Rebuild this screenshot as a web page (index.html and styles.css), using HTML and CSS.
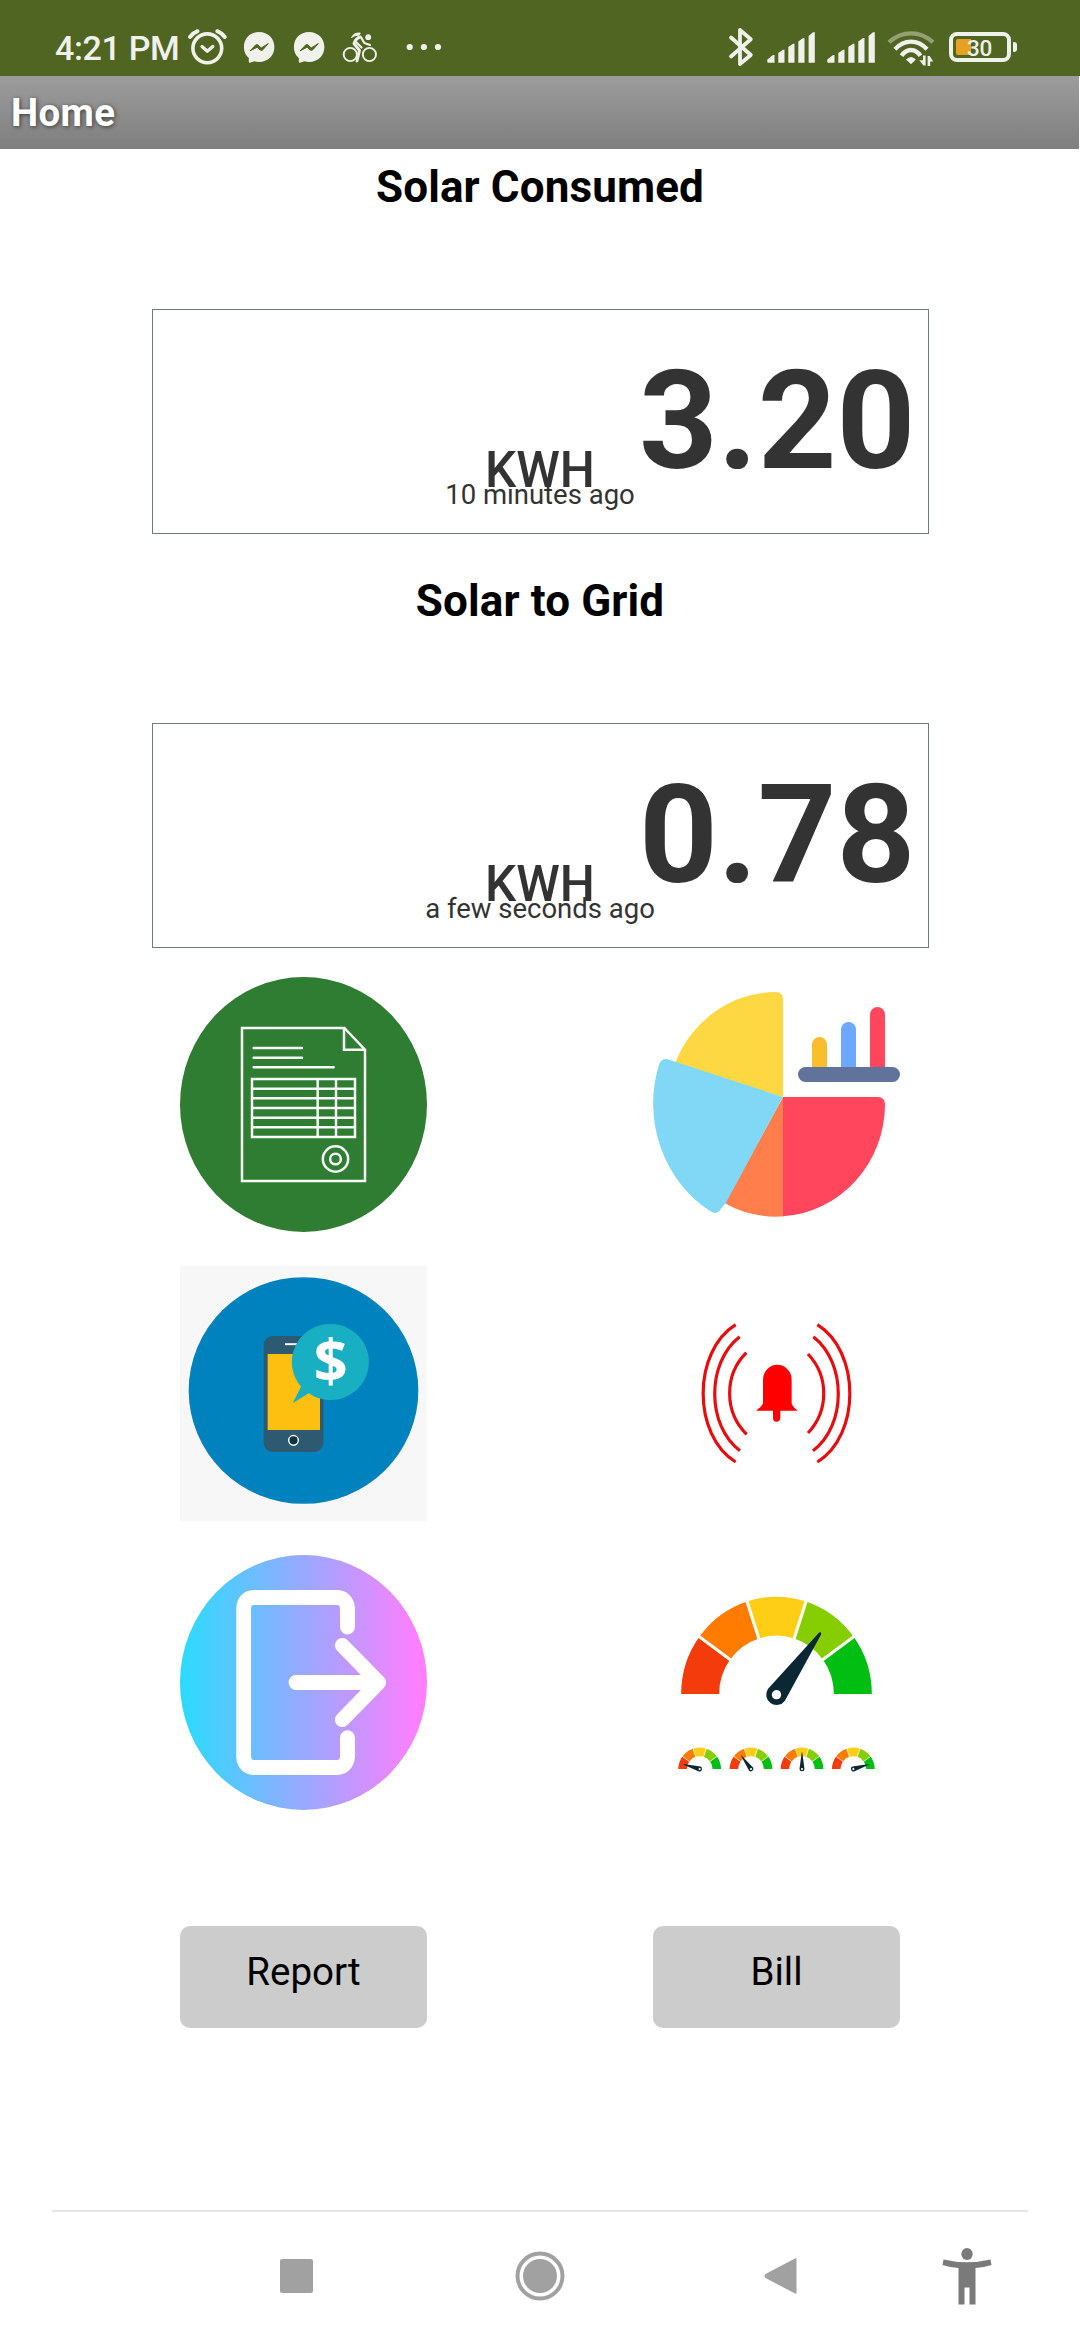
FILE: index.html
```html
<!DOCTYPE html>
<html lang="en">
<head>
<meta charset="utf-8">
<title>Home</title>
<link rel="stylesheet" href="styles.css">
</head>
<body>
<div class="screen">
  <div class="status-bar">
    <span class="clock">4:21 PM</span>
    <svg class="ico alarm" viewBox="186 26 42 42" width="42" height="42" fill="none" stroke="#f0f1ea" stroke-linecap="round">
      <circle cx="207.3" cy="48.3" r="14.4" stroke-width="3.6"/>
      <path d="M190 37Q193 33 197.500 31.200M224.800 37Q221.800 33 217.300 31.200" stroke-width="4"/>
      <path d="M202 46.500L207.300 51.200L212.800 46.500" stroke-width="3.300" stroke-linejoin="round"/>
    </svg>
    <svg class="ico chat" viewBox="243 31 32 33" width="32" height="33">
      <path d="M259 32C250 32 243.900 38.500 243.900 47C243.900 51.500 245.500 55.500 248.800 58V61.500Q248.900 63.400 250.600 62.600L254.500 61.300Q256.500 62 259 62C268 62 274.400 55.500 274.400 47C274.400 38.500 268 32 259 32Z" fill="#f0f1ea"/>
      <path d="M250.200 50.800L255.600 45Q256.800 44 258 45L261.200 48L268.300 43.600L262.800 49.800Q261.600 51 260.400 50L257.200 47.200Z" fill="#516523" stroke="#516523" stroke-width="1" stroke-linejoin="round"/>
    </svg>
    <svg class="ico chat-2" viewBox="243 31 32 33" width="32" height="33">
      <path d="M259 32C250 32 243.900 38.500 243.900 47C243.900 51.500 245.500 55.500 248.800 58V61.500Q248.900 63.400 250.600 62.600L254.500 61.300Q256.500 62 259 62C268 62 274.400 55.500 274.400 47C274.400 38.500 268 32 259 32Z" fill="#f0f1ea"/>
      <path d="M250.200 50.800L255.600 45Q256.800 44 258 45L261.200 48L268.300 43.600L262.800 49.800Q261.600 51 260.400 50L257.200 47.200Z" fill="#516523" stroke="#516523" stroke-width="1" stroke-linejoin="round"/>
    </svg>
    <svg class="ico bike" viewBox="341 31 36 33" width="36" height="33" fill="none" stroke="#f0f1ea" stroke-linecap="round" stroke-linejoin="round">
      <circle cx="349.300" cy="54.500" r="6.600" stroke-width="1.900"/>
      <circle cx="368.400" cy="54.500" r="6.600" stroke-width="1.900"/>
      <circle cx="367.200" cy="37.200" r="2.900" fill="#f0f1ea" stroke="none"/>
      <path d="M350.800 37.200Q352.500 32.600 359.300 33L358 35.200Q354 35 350.800 37.200Z" fill="#f0f1ea" stroke-width="1"/>
      <path d="M359.300 37Q354.500 38.500 353 43.500L358.500 50.500L356 61" stroke-width="2.900"/>
      <path d="M355 42L360.500 47.500M360.500 38L363.300 43L369 45" stroke-width="2.200"/>
    </svg>
    <svg class="ico dots" viewBox="405 43 36 8" width="36" height="8" fill="#f0f1ea">
      <circle cx="408.700" cy="47" r="3.100"/><circle cx="422.900" cy="47" r="3.100"/><circle cx="437" cy="47" r="3.100"/>
    </svg>
    <span class="spacer"></span>
    <svg class="ico bluetooth" viewBox="728 27 26 40" width="26" height="40" fill="none" stroke="#f0f1ea" stroke-width="3.800" stroke-linecap="round" stroke-linejoin="round">
      <path d="M731 37.500L750.800 55L740 64V30L750.800 39.300L731 56.500"/>
    </svg>
    <svg class="ico signal" viewBox="767 31 49 33" width="49" height="33" fill="#f0f1ea">
      <path d="M767.300 59.500L773 55H774.500V62.800H768.300Q767.300 62.800 767.300 61.800ZM778.300 53L783 49.700H784.500V62.800H778.300ZM788.300 47L793 43.700H794.500V62.800H788.300ZM798.300 41.500L803 38H804.500V62.800H798.300ZM808.600 36L813 32.300H814.800V62.800H808.600Z"/>
    </svg>
    <svg class="ico signal-2" viewBox="767 31 49 33" width="49" height="33" fill="#f0f1ea">
      <path d="M767.300 59.500L773 55H774.500V62.800H768.300Q767.300 62.800 767.300 61.800ZM778.300 53L783 49.700H784.500V62.800H778.300ZM788.300 47L793 43.700H794.500V62.800H788.300ZM798.300 41.500L803 38H804.500V62.800H798.300ZM808.600 36L813 32.300H814.800V62.800H808.600Z"/>
    </svg>
    <svg class="ico wifi" viewBox="887 30 48 37" width="48" height="37" fill="none" stroke="#f0f1ea" stroke-width="4.300">
      <path d="M889 42.300Q898.500 33.300 911 33.300T933 42.300" stroke="#949f74"/>
      <path d="M895 49.200Q902 41.600 911 41.600T927 49.200"/>
      <path d="M901.500 55.800Q905.500 50 911 50T920.500 55.800"/>
      <path d="M906 59.500Q911 54.500 915.800 59.500L911 64.300Z" fill="#f0f1ea" stroke="none"/>
      <path d="M923 55.500H925.600V65.500H923.500L919.300 60.200H923ZM927.600 66V56H929.700L933.200 61.500H930.200V66Z" fill="#f0f1ea" stroke="none"/>
    </svg>
    <div class="battery"><span class="battery-fill"></span><span class="battery-text">30</span></div>
    <span class="battery-nub"></span>
  </div>

  <header class="title-bar">Home</header>

  <main class="content">
    <section class="meter">
      <h2>Solar Consumed</h2>
      <div class="reading">
        <span class="unit">KWH</span>
        <span class="value">3.20</span>
        <span class="when">10 minutes ago</span>
      </div>
    </section>
    <section class="meter">
      <h2>Solar to Grid</h2>
      <div class="reading">
        <span class="unit">KWH</span>
        <span class="value">0.78</span>
        <span class="when">a few seconds ago</span>
      </div>
    </section>

    <div class="tiles">
      <svg class="tile" viewBox="60 51 741 765">
        <ellipse cx="430.500" cy="433.500" rx="370.500" ry="382.500" fill="#2f7d32"/>
        <g fill="none" stroke="#f8fbf8" stroke-width="7.500">
          <path d="M246 204H553L615 269V663H246ZM552 206V269H613"/>
          <path d="M281 264H426M281 293H426M281 322H521" stroke-linecap="round"/>
          <path d="M276 357H585V531H276ZM276 386H585M276 415H585M276 444H585M276 473H585M276 502H585M473 357V531M528 357V531"/>
          <circle cx="526.500" cy="597" r="38"/><circle cx="526.500" cy="597" r="16"/>
        </g>
      </svg>
      <svg class="tile" viewBox="69 51 741 765">
        <path d="M459 411L285 730Q352 769 437 770L462 769V411Z" fill="#ff7e4b"/>
        <path d="M459 411V116Q458 97 437 96A328 337 0 0 0 137 305L140 315Z" fill="#fed843"/>
        <path d="M459 411H743Q765 412 765 433A328 337 0 0 1 459 769Z" fill="#ff465c"/>
        <path d="M459 411L113 298Q94 294 87 314A362 380 0 0 0 241 754Q263 767 274 745L286 731Z" fill="#80d8f6"/>
        <path d="M546 325V254A22.500 23 0 0 1 591 254V325Z" fill="#fabe2c"/>
        <path d="M633 325V209A22.500 23 0 0 1 678 209V325Z" fill="#6ca8ff"/>
        <path d="M720 325V164A22.500 23 0 0 1 765 164V325Z" fill="#ff465c"/>
        <rect x="504" y="321" width="306" height="45" rx="22.500" fill="#62739b"/>
      </svg>
      <svg class="tile" viewBox="60 48 741 765">
        <rect x="60" y="48" width="741" height="765" fill="#f7f7f7"/>
        <ellipse cx="430.500" cy="421.500" rx="344.500" ry="340" fill="#0082be"/>
        <rect x="311" y="258" width="179" height="348" rx="27" fill="#2d5971"/>
        <path d="M375 282.500H425" stroke="#f5f8fa" stroke-width="6"/>
        <rect x="323" y="312" width="157" height="228" fill="#fdc010"/>
        <circle cx="400.500" cy="571" r="14.500" fill="#0d3348" stroke="#f5fafa" stroke-width="4.500"/>
        <path d="M512 222A115.500 114 0 1 1 446 430L398 460L423 410A115.500 114 0 0 1 512 222Z" fill="#17afc1"/>
        <text class="dollar" x="512" y="396" text-anchor="middle">$</text>
      </svg>
      <svg class="tile" viewBox="69 48 741 765">
        <path d="M399 390A42.500 45 0 0 1 485 390V460Q488 472 503 482H451V503Q450 515 439.500 515T429 503V482H378Q394 472 399 460Z" fill="#f00"/>
        <g fill="none" stroke="#e90c0e" stroke-width="9.500">
          <path d="M317 224C187 305 187 556 317 636M329 260C229 338 229 526 330 602M349 308C282 375 282 486 350 553"/>
          <path d="M562 224C692 305 692 556 562 636M550 260C650 338 650 526 549 602M534 312C597 379 597 482 534 549"/>
        </g>
      </svg>
      <svg class="tile" viewBox="60 45 741 765">
        <defs>
          <linearGradient id="sky" x1="0" x2="1" y1="0" y2="0">
            <stop offset="0" stop-color="#2cdbff"/><stop offset=".07" stop-color="#38d5ff"/><stop offset=".5" stop-color="#98a9ff"/><stop offset=".95" stop-color="#fb80ff"/><stop offset="1" stop-color="#ff7efd"/>
          </linearGradient>
        </defs>
        <ellipse cx="430.500" cy="427.500" rx="370.500" ry="382.500" fill="url(#sky)"/>
        <g fill="none" stroke="#fff" stroke-width="44.500" stroke-linecap="round" stroke-linejoin="round">
          <path d="M562.500 261V205Q560 174 532 172.500H281Q253 174 251 205V650Q253 680 281 682.500H532Q560 680 562.500 650V593"/>
          <path d="M408 427.500H655M547 316L656 427.500L547 539"/>
        </g>
      </svg>
      <svg class="tile" viewBox="69 45 741 765">
        <defs>
          <g id="dial">
            <g fill="none" stroke-width="114">
              <path d="M-229 0A229 229 0 0 1 -185.300 -134.600" stroke="#f43b0c"/>
              <path d="M-185.300 -134.600A229 229 0 0 1 -70.800 -217.800" stroke="#ff7c00"/>
              <path d="M-70.800 -217.800A229 229 0 0 1 70.800 -217.800" stroke="#fece17"/>
              <path d="M70.800 -217.800A229 229 0 0 1 185.300 -134.600" stroke="#86ce02"/>
              <path d="M185.300 -134.600A229 229 0 0 1 229 0" stroke="#00bf12"/>
            </g>
            <path d="M-121.400 -88.200L-242.700 -176.300M-46.400 -142.700L-92.700 -285.300M46.400 -142.700L92.700 -285.300M121.400 -88.200L242.700 -176.300" stroke="#fffef4" stroke-width="9.500"/>
          </g>
          <g id="needle">
            <path d="M-31 0L-4 -226Q0 -232 4 -226L31 0A31 31 0 0 1 -31 0Z" fill="#0a2733"/>
            <circle r="14" fill="#fff"/>
          </g>
        </defs>
        <use href="#dial" transform="translate(439.500 462) scale(1 1.020)"/>
        <use href="#needle" transform="translate(439.500 464) rotate(35.500)"/>
        <use href="#dial" transform="translate(209 687) scale(.224)"/>
        <use href="#needle" transform="translate(209 687) rotate(-74) scale(.240 .220)"/>
        <use href="#dial" transform="translate(363 687) scale(.224)"/>
        <use href="#needle" transform="translate(363 687) rotate(-36) scale(.240 .220)"/>
        <use href="#dial" transform="translate(516 687) scale(.224)"/>
        <use href="#needle" transform="translate(516 687) scale(.240 .220)"/>
        <use href="#dial" transform="translate(670 687) scale(.224)"/>
        <use href="#needle" transform="translate(670 687) rotate(73.500) scale(.240 .220)"/>
      </svg>
    </div>

    <div class="actions">
      <button class="action">Report</button>
      <button class="action">Bill</button>
    </div>
  </main>

  <nav class="nav-bar">
    <svg class="nav-recent" viewBox="0 0 33 34" width="33" height="34"><rect width="33" height="34" rx="2" fill="#a1a1a1"/></svg>
    <svg class="nav-home" viewBox="0 0 50 50" width="50" height="50"><circle cx="25" cy="25" r="22.500" fill="none" stroke="#a1a1a1" stroke-width="4"/><circle cx="25" cy="25" r="17" fill="#a1a1a1"/></svg>
    <svg class="nav-back" viewBox="0 0 33 38" width="33" height="38"><path d="M31 1.500Q32.500 .500 32.500 2.500V35.500Q32.500 37.500 31 36.500L1.500 21Q-.500 19 1.500 17Z" fill="#a1a1a1"/></svg>
    <svg class="nav-access" viewBox="0 0 50 57" width="50" height="57" fill="#7a7a7a"><ellipse cx="25" cy="6" rx="5.700" ry="6"/><path d="M1.500 11.500Q25 17 48.500 11.500L49.500 17Q42 19.500 33.500 20V56.500H27.500V39.500H22.500V56.500H16.500V20Q8 19.500 .500 17Z"/></svg>
  </nav>
</div>
</body>
</html>
```
FILE: styles.css
```css
* { box-sizing: border-box; }

body {
  margin: 0;
  background: #fff;
  font-family: Roboto, "Liberation Sans", sans-serif;
}

.screen {
  display: flex;
  flex-direction: column;
  width: 1080px;
  height: 2340px;
  overflow: hidden;
}

svg { display: block; flex: none; }

/* status bar */
.status-bar {
  display: flex;
  align-items: flex-start;
  height: 76px;
  padding: 26px 63px 0 55px;
  background: #516523;
  color: #f0f1ea;
}
.clock {
  width: 131px;
  margin-top: 2px;
  font-size: 34px;
  font-weight: 500;
  letter-spacing: -.35px;
  line-height: 40px;
  white-space: nowrap;
}
.spacer { flex: 1; }
.chat { margin: 5px 0 0 15px; }
.chat-2 { margin: 5px 0 0 18px; }
.bike { margin: 5px 0 0 17px; }
.dots { margin: 17px 0 0 28px; }
.bluetooth { margin: 1px 13px 0 0; }
.signal { margin: 5px 11px 0 0; }
.signal-2 { margin: 5px 11px 0 0; }
.wifi { margin: 4px 14px 0 0; }
.battery {
  display: flex;
  align-items: center;
  width: 62px;
  height: 30px;
  margin-top: 6px;
  padding-left: 3px;
  border: 4px solid #f0f1ea;
  border-radius: 8px;
}
.battery-fill {
  width: 15px;
  height: 16px;
  border-radius: 2px 0 0 2px;
  background: #e6a023;
}
.battery-text {
  margin: 1px 0 0 -4px;
  font-size: 22.5px;
  font-weight: 500;
  letter-spacing: -.4px;
  line-height: 22px;
}
.battery-nub {
  width: 4px;
  height: 10px;
  margin: 16px 0 0 2px;
  border-radius: 1px 3px 3px 1px;
  background: #f0f1ea;
}

/* title */
.title-bar {
  width: 1079px;
  height: 73px;
  padding-left: 11px;
  background: linear-gradient(#9c9c9c, #7f7f7f);
  color: #fff;
  font-size: 38.5px;
  font-weight: 700;
  letter-spacing: .3px;
  line-height: 73px;
  text-shadow: 1px 1px 4px rgba(0, 0, 0, .6);
}

/* readings */
.content { flex: 1; }
.meter {
  display: flex;
  flex-direction: column;
  align-items: center;
  height: 385px;
  margin-bottom: 29px;
  padding-top: 12px;
}
.meter h2 {
  margin: 0 0 auto;
  color: #000;
  font-size: 44px;
  font-weight: 700;
  letter-spacing: .12px;
  line-height: 52px;
}
.reading {
  display: grid;
  width: 777px;
  height: 225px;
  border: 1px solid #6f7a81;
  color: #333;
}
.unit, .value, .when {
  grid-area: 1 / 1;
  justify-self: center;
  white-space: nowrap;
}
.unit {
  margin-top: 130px;
  font-size: 49.5px;
  font-weight: 500;
  line-height: 60px;
}
.value {
  justify-self: end;
  margin: 41px 12px 0 0;
  font-size: 137.5px;
  font-weight: 700;
  line-height: 140px;
}
.when {
  margin-top: 169px;
  font-size: 27.5px;
  line-height: 32px;
}

/* icon tiles and buttons share the same two columns */
.tiles, .actions {
  display: grid;
  grid-template-columns: 247px 247px;
  column-gap: 226px;
  padding-left: 180px;
}
.tiles { row-gap: 34px; }
.tile { width: 247px; height: 255px; }
.dollar {
  fill: #fff;
  font-family: "Open Sans", "Noto Sans", sans-serif;
  font-size: 178px;
  font-weight: 700;
}
.actions { margin-top: 116px; }
.action {
  height: 102px;
  padding: 0 0 12px;
  border: 0;
  border-radius: 10px;
  background: #ccc;
  color: #000;
  font-family: inherit;
  font-size: 38.5px;
}

/* system navigation */
.nav-bar {
  display: flex;
  align-items: center;
  width: 976px;
  height: 130px;
  margin-left: 52px;
  border-top: 2px solid #e5e5e5;
}
.nav-recent { margin-left: 228px; }
.nav-home { margin-left: 202px; }
.nav-back { margin-left: 199px; }
.nav-access { margin-left: 145px; }
```
